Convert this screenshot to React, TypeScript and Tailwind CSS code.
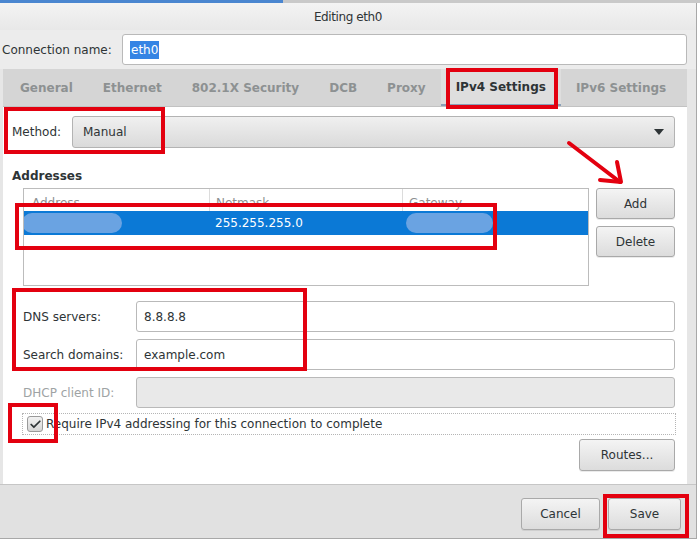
import { Check } from 'lucide-react';

const font = { fontFamily: '"DejaVu Sans", "Noto Sans", sans-serif' };

function Btn({ label, className = '' }: { label: string; className?: string }) {
  return (
    <div
      className={`flex items-center justify-center rounded-[3px] border border-[#a9a9a9] bg-gradient-to-b from-[#f4f4f4] to-[#dcdcdc] text-[12px] text-[#2e3436] shadow-[0_1px_0_rgba(0,0,0,0.08)] ${className}`}
    >
      {label}
    </div>
  );
}

function Field({ label, value, disabled = false }: { label: string; value?: string; disabled?: boolean }) {
  return (
    <div className="flex items-center">
      <span className={`w-[113px] shrink-0 ${disabled ? 'text-[#9ea3a4]' : 'text-[#2e3436]'}`}>{label}</span>
      <div
        className={`flex h-[31px] flex-1 items-center rounded-[3px] border border-[#b9b9b9] px-[7px] text-[#2e3436] ${
          disabled ? 'bg-[#e9e9e9]' : 'bg-white'
        }`}
      >
        {value}
      </div>
    </div>
  );
}

const tabs = ['General', 'Ethernet', '802.1X Security', 'DCB', 'Proxy', 'IPv4 Settings', 'IPv6 Settings'];

export default function App() {
  return (
    <div className="relative h-[550px] w-[700px] overflow-hidden bg-white text-[12px] text-[#2e3436]" style={font}>
      {/* strip of the window behind */}
      <div className="flex h-[3px]">
        <div className="w-[283px] bg-[#4a86d0]" />
        <div className="flex-1 bg-[#c9c9c9]" />
      </div>

      <div className="flex h-[536px] w-[697px] flex-col border-r border-b border-[#a8a8a8] bg-[#e6e6e6]">
        {/* title */}
        <div className="flex h-[27px] items-center justify-center bg-gradient-to-b from-[#f3f3f3] to-[#e8e8e8] text-[12px] tracking-[-0.4px] text-[#2e3436]">
          Editing eth0
        </div>

        {/* connection name */}
        <div className="flex h-[39px] items-center bg-[#ececec] pl-[2px] pr-[9px]">
          <span className="w-[120px] shrink-0">Connection name:</span>
          <div className="flex h-[31px] flex-1 items-center rounded-[3px] border border-[#b9b9b9] bg-white px-[7px]">
            <span className="bg-[#3584e4] px-[1px] text-white">eth0</span>
          </div>
        </div>

        <div className="ml-[3px] mr-[9px] flex flex-1 flex-col">
          {/* tabs */}
          <div className="flex h-[38px] items-stretch border-b border-[#c2c2c2] bg-[#d5d5d5] pl-[2px]">
            {tabs.map((t) => (
              <div
                key={t}
                className={`flex items-center px-[15px] font-bold ${
                  t === 'IPv4 Settings'
                    ? 'border-b-2 border-[#8aa0b8] bg-[#dedede] text-[#2e3436]'
                    : 'text-[#8d9192]'
                }`}
              >
                {t}
              </div>
            ))}
          </div>

          {/* page */}
          <div className="flex flex-1 flex-col bg-white pl-[9px] pr-[12px] pt-[9px]">
            <div className="flex items-center">
              <span className="w-[60px] shrink-0">Method:</span>
              <div className="flex h-[32px] flex-1 items-center justify-between rounded-[3px] border border-[#b3b3b3] bg-gradient-to-b from-[#f0f0f0] to-[#dadada] pl-[10px] pr-[10px]">
                <span>Manual</span>
                <svg width="10" height="6" viewBox="0 0 10 6">
                  <path d="M0 0h10L5 6z" fill="#2e3436" />
                </svg>
              </div>
            </div>

            <div className="mt-[19px] font-bold">Addresses</div>

            <div className="ml-[11px] mt-[3px] flex gap-[7px]">
              <div className="h-[98px] flex-1 overflow-hidden border border-[#bcbcbc] bg-white">
                <div className="flex h-[22px] text-[#8d9192]">
                  <div className="w-[186px] border-r border-[#dcdcdc] pl-[8px] pt-[5px]">Address</div>
                  <div className="w-[193px] border-r border-[#dcdcdc] pl-[6px] pt-[5px]">Netmask</div>
                  <div className="flex-1 pl-[6px] pt-[5px]">Gateway</div>
                </div>
                <div className="flex h-[24px] items-center bg-[#0b79d6] text-white">
                  <div className="w-[186px]">
                    <div className="ml-[-2px] h-[20px] w-[100px] rounded-[10px] bg-[#6aa3e2]" />
                  </div>
                  <div className="w-[193px] pl-[5px]">255.255.255.0</div>
                  <div className="flex-1 pl-[3px]">
                    <div className="h-[20px] w-[87px] rounded-[10px] bg-[#6aa3e2]" />
                  </div>
                </div>
              </div>
              <div className="flex w-[79px] flex-col gap-[7px]">
                <Btn label="Add" className="h-[31px]" />
                <Btn label="Delete" className="h-[31px]" />
              </div>
            </div>

            <div className="ml-[11px] mt-[15px] flex flex-col gap-[7px]">
              <Field label="DNS servers:" value="8.8.8.8" />
              <Field label="Search domains:" value="example.com" />
              <Field label="DHCP client ID:" disabled />
            </div>

            <div className="ml-[10px] mr-[-1px] mt-[5px] flex h-[22px] items-center border border-dotted border-[#b5b5b5] pl-[4px]">
              <div className="flex h-[16px] w-[16px] items-center justify-center rounded-[3px] border border-[#9a9a9a] bg-gradient-to-b from-[#f2f2f2] to-[#d6d6d6]">
                <Check size={13} strokeWidth={3.2} color="#2e3436" />
              </div>
              <span className="ml-[3px]">Require IPv4 addressing for this connection to complete</span>
            </div>

            <div className="mt-[4px] flex justify-end">
              <Btn label="Routes..." className="h-[32px] w-[96px]" />
            </div>
          </div>
        </div>

        {/* bottom bar */}
        <div className="flex h-[54px] items-start justify-end gap-[8px] border-t border-[#c6c6c6] bg-[#e1e1e1] pr-[15px] pt-[13px]">
          <Btn label="Cancel" className="h-[32px] w-[79px]" />
          <Btn label="Save" className="h-[32px] w-[73px] text-[#2c4d5c]" />
        </div>
      </div>

      {/* annotations */}
      <div className="pointer-events-none absolute left-[446px] top-[68px] h-[41px] w-[112px] border-[4px] border-[#e3000f]" />
      <div className="pointer-events-none absolute left-[4px] top-[107px] h-[47px] w-[161px] border-[4px] border-[#e3000f]" />
      <div className="pointer-events-none absolute left-[15px] top-[203px] h-[47px] w-[482px] border-[4px] border-[#e3000f]" />
      <div className="pointer-events-none absolute left-[12px] top-[288px] h-[83px] w-[295px] border-[4px] border-[#e3000f]" />
      <div className="pointer-events-none absolute left-[8px] top-[403px] h-[40px] w-[50px] border-[4px] border-[#e3000f]" />
      <div className="pointer-events-none absolute left-[603px] top-[494px] h-[44px] w-[86px] border-[4px] border-[#e3000f]" />
      <svg className="pointer-events-none absolute left-[560px] top-[135px]" width="70" height="55" viewBox="0 0 70 55">
        <path d="M9 8 L60 47" stroke="#e3000f" strokeWidth="4" strokeLinecap="round" fill="none" />
        <path d="M57 27 L61 47 L40 45" stroke="#e3000f" strokeWidth="4" strokeLinecap="round" strokeLinejoin="round" fill="none" />
      </svg>
    </div>
  );
}
